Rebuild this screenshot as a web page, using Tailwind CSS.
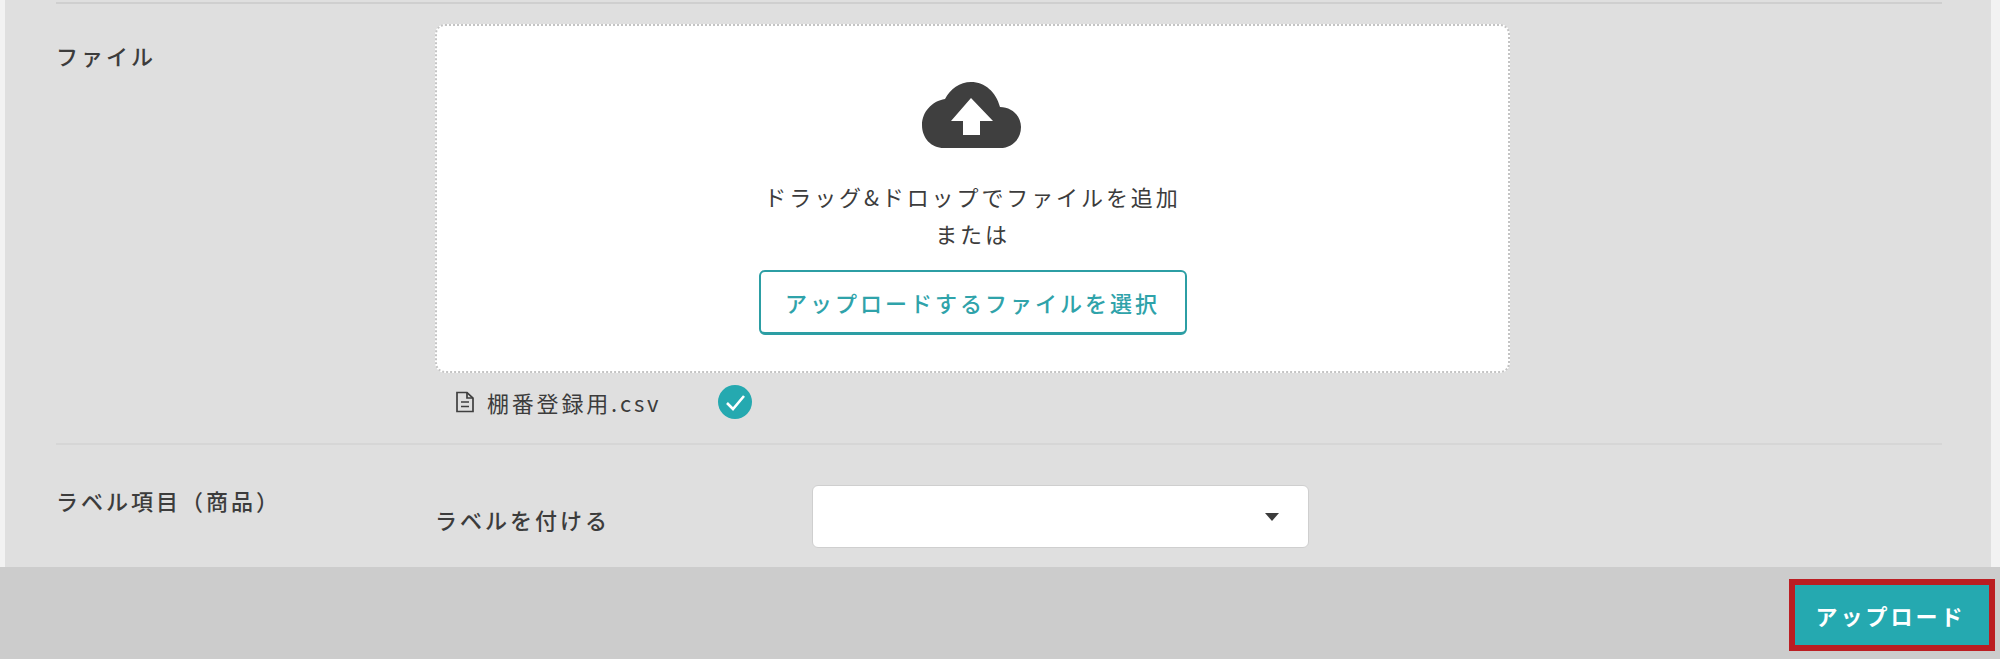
<!DOCTYPE html>
<html lang="ja">
<head>
    <meta charset="UTF-8">
    <title>アップロード</title>
    <script src="https://cdn.jsdelivr.net/npm/@tailwindcss/browser@4"></script>
</head>
<body class="bg-[#f2f2f2] font-['Noto_Sans_CJK_JP','Noto_Sans',sans-serif] text-[#3c3c3c]">
    <div class="h-[659px] flex flex-col overflow-hidden">
        <!-- Main panel -->
        <main class="flex-1 min-h-0 overflow-hidden ml-[5px] mr-[9px] bg-[#dfdfdf] pl-[51px] pr-[49px]">
            <div class="border-t-2 border-[#cfcfcf] mt-[2px]"></div>

            <!-- File row -->
            <section class="flex border-b-2 border-[#d6d6d6] h-[441px]">
                <div class="w-[379px] pt-[36px] text-[22px] leading-[30px] font-medium tracking-[3px]">ファイル</div>
                <div class="pt-[20px]">
                    <div class="w-[1075px] h-[349px] bg-white border-2 border-dotted border-[#c4c4c4] rounded-[10px] flex flex-col items-center pt-[56px]">
                        <svg class="w-[100px] h-[66px] -ml-[1px]" viewBox="0 0 100 66">
                            <path fill="#3f3f3f" d="M22 66C9 66 0 56 0 43C0 30 10 19 23 17C28 7 38 0 49 0C63 0 74 10 78 25C90 25 99 34 99 45C99 57 90 66 78 66Z"/>
                            <path fill="#fff" d="M49 16L71 39H58V53H41V39H29Z"/>
                        </svg>
                        <p class="mt-[30px] text-[22px] leading-[37px] tracking-[2.9px] text-center">ドラッグ&amp;ドロップでファイルを追加<br>または</p>
                        <button class="mt-[18px] w-[428px] h-[65px] border-2 border-b-[3px] border-[#2c9ea4] rounded-[6px] bg-white text-[#2fa3aa] text-[22px] font-medium tracking-[3px]">アップロードするファイルを選択</button>
                    </div>
                    <div class="flex items-center h-[58px] pl-[20px]">
                        <svg class="w-[20px] h-[22px]" viewBox="0 0 20 22" fill="none" stroke="#3f3f3f" stroke-width="1.7">
                            <path d="M2 1.5H12L18 7V20.5H2Z"/>
                            <path d="M12 1.5V7H18M6 11H14M6 15.5H14"/>
                        </svg>
                        <span class="ml-[12px] w-[231px] text-[22px] tracking-[2.8px]">棚番登録用.csv</span>
                        <svg class="w-[34px] h-[34px]" viewBox="0 0 34 34">
                            <circle cx="17" cy="17" r="17" fill="#25a9b0"/>
                            <path d="M9 18L15 24L26 11" fill="none" stroke="#fff" stroke-width="2.6"/>
                        </svg>
                    </div>
                </div>
            </section>

            <!-- Label row -->
            <section class="flex">
                <div class="w-[379px] pt-[40px] text-[22px] leading-[30px] font-medium tracking-[3px] whitespace-nowrap">ラベル項目（商品）</div>
                <div class="flex pt-[40px]">
                    <div class="w-[377px] pt-[19px] text-[22px] leading-[30px] font-medium tracking-[3px]">ラベルを付ける</div>
                    <div class="w-[497px] h-[63px] bg-white border border-[#cfcfcf] rounded-[6px] flex items-center justify-end pr-[29px]">
                        <div class="w-0 h-0 border-x-[7px] border-x-transparent border-t-[8px] border-t-[#3c3c3c]"></div>
                    </div>
                </div>
            </section>
        </main>

        <!-- Footer -->
        <footer class="h-[92px] bg-[#cccccc] flex justify-end items-start pt-[12px] pr-[5px]">
            <button class="w-[206px] h-[72px] pr-[3px] bg-[#25a9b0] border-[6px] border-[#bb1e22] text-white text-[22px] font-bold tracking-[3px]">アップロード</button>
        </footer>
    </div>
</body>
</html>
